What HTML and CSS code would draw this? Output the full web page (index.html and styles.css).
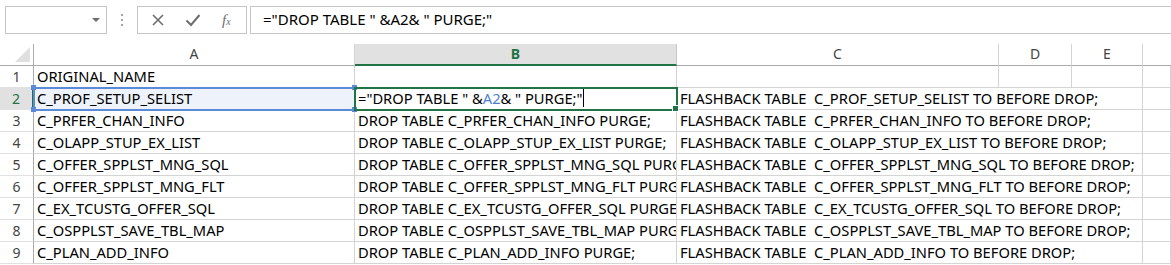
FILE: index.html
```html
<!DOCTYPE html>
<html lang="ko">
<head>
    <meta charset="UTF-8">
    <title>Book1 - Excel</title>
    <link rel="stylesheet" href="styles.css">
</head>
<body>
    <div class="formula-bar">
        <div class="name-box"><span class="name-arrow"></span></div>
        <div class="grip"><span></span><span></span><span></span></div>
        <div class="fx-buttons">
            <svg class="btn-icon" width="14" height="14" viewBox="0 0 14 14"><path d="M2 2 L12 12 M12 2 L2 12" stroke="#6d6d6d" stroke-width="1.6" fill="none"/></svg>
            <svg class="btn-icon" width="16" height="14" viewBox="0 0 16 14"><path d="M1.5 7.5 L6 12 L14.5 2" stroke="#6d6d6d" stroke-width="2" fill="none"/></svg>
            <span class="fx">f<sub>x</sub></span>
        </div>
        <div class="formula-input">="DROP TABLE " &amp;A2&amp; " PURGE;"</div>
    </div>

    <div class="sheet" id="sheet">
        <div class="corner"><span class="corner-tri"></span></div>
        <div class="col-head">A</div>
        <div class="col-head active">B</div>
        <div class="col-head">C</div>
        <div class="col-head">D</div>
        <div class="col-head">E</div>
        <div class="col-head last"></div>
    </div>

    <script>
        const names = [
            "C_PROF_SETUP_SELIST",
            "C_PRFER_CHAN_INFO",
            "C_OLAPP_STUP_EX_LIST",
            "C_OFFER_SPPLST_MNG_SQL",
            "C_OFFER_SPPLST_MNG_FLT",
            "C_EX_TCUSTG_OFFER_SQL",
            "C_OSPPLST_SAVE_TBL_MAP",
            "C_PLAN_ADD_INFO"
        ];

        const sheet = document.getElementById("sheet");

        function addCell(cls, html) {
            const cell = document.createElement("div");
            cell.className = cls;
            cell.innerHTML = html;
            sheet.appendChild(cell);
            return cell;
        }

        // row 1: header names only
        addCell("row-head", "1");
        addCell("cell", "ORIGINAL_NAME");
        ["", "", "", "", ""].forEach(() => addCell("cell", ""));

        names.forEach((name, i) => {
            const row = i + 2;
            if (row === 2) {
                addCell("row-head active", "2");
                addCell("cell ref-range", name + '<span class="h tl"></span><span class="h tr"></span><span class="h bl"></span><span class="h br"></span>');
                addCell("cell editing", '="DROP TABLE " &amp;<span class="ref">A2</span>&amp; " PURGE;"<span class="caret"></span><span class="fill-handle"></span>');
            } else {
                addCell("row-head", String(row));
                addCell("cell", name);
                addCell("cell", "DROP TABLE " + name + " PURGE;");
            }
            addCell("cell span3", "FLASHBACK TABLE  " + name + " TO BEFORE DROP;");
            addCell("cell", "");
        });
    </script>
</body>
</html>
```

FILE: styles.css
```css
body {
    margin: 0;
    font-family: 'Noto Sans', 'Noto Sans CJK KR', sans-serif;
    background: #ffffff;
    color: #000000;
    overflow: hidden;
}
.formula-bar {
    display: flex;
    align-items: flex-start;
    height: 44px;
    padding: 6px 0 0 5px;
    box-sizing: border-box;
}
.name-box {
    position: relative;
    width: 102px;
    height: 28px;
    border: 1px solid #c6c6c6;
    box-sizing: border-box;
}
.name-arrow {
    position: absolute;
    right: 6px;
    top: 11px;
    border-left: 4px solid transparent;
    border-right: 4px solid transparent;
    border-top: 4px solid #6d6d6d;
}
.grip {
    display: flex;
    flex-direction: column;
    gap: 3px;
    width: 30px;
    height: 28px;
    align-items: center;
    justify-content: center;
    box-sizing: border-box;
}
.grip span {
    width: 2px;
    height: 2px;
    background: #a6a6a6;
}
.fx-buttons {
    display: flex;
    align-items: center;
    width: 110px;
    height: 28px;
    border: 1px solid #c6c6c6;
    box-sizing: border-box;
    padding-left: 13px;
    gap: 20px;
}
.fx {
    font-family: 'Liberation Serif', serif;
    font-style: italic;
    font-size: 15px;
    color: #6d6d6d;
    line-height: 1;
    margin-left: 1px;
}
.fx sub {
    font-size: 10px;
    vertical-align: 0;
}
.formula-input {
    flex: 1;
    height: 28px;
    margin-left: 3px;
    border-top: 1px solid #c6c6c6;
    border-bottom: 1px solid #c6c6c6;
    border-left: 1px solid #c6c6c6;
    box-sizing: border-box;
    padding-left: 12px;
    font-size: 15px;
    line-height: 25px;
    white-space: pre;
}
.sheet {
    display: grid;
    grid-template-columns: 34px 321px 322px 322px 73px 71px 1fr;
    grid-auto-rows: 22px;
    font-size: 14.7px;
}
.corner {
    position: relative;
    border-right: 1px solid #ababab;
    border-bottom: 1px solid #ababab;
}
.corner-tri {
    position: absolute;
    right: 3px;
    bottom: 3px;
    border-left: 15px solid transparent;
    border-bottom: 15px solid #dfdfdf;
}
.col-head {
    display: flex;
    align-items: center;
    justify-content: center;
    border-bottom: 1px solid #ababab;
    border-right: 1px solid #d4d4d4;
    color: #444444;
    font-size: 14px;
    padding-bottom: 2px;
    box-sizing: border-box;
}
.col-head.active {
    background: #e1e1e1;
    color: #217346;
    font-weight: bold;
    border-bottom: 2px solid #217346;
    border-right-color: #c6c6c6;
}
.col-head.last {
    border-right: none;
}
.row-head {
    display: flex;
    align-items: center;
    justify-content: center;
    border-right: 1px solid #ababab;
    border-bottom: 1px solid #e1e1e1;
    color: #444444;
    font-size: 14px;
    box-sizing: border-box;
}
.row-head.active {
    background: #e1e1e1;
    color: #217346;
    border-right: 2px solid #217346;
}
.cell {
    position: relative;
    display: flex;
    align-items: flex-end;
    padding: 0 0 1px 3px;
    border-right: 1px solid #d4d4d4;
    border-bottom: 1px solid #d4d4d4;
    box-sizing: border-box;
    white-space: pre;
    overflow: hidden;
    line-height: 20px;
}
.span3 {
    grid-column: span 3;
}
.ref-range {
    overflow: visible;
    background: #eef2fb;
    outline: 2px solid #5b8ad8;
    outline-offset: -1px;
    z-index: 1;
}
.ref {
    color: #4a7fd4;
}
.h {
    position: absolute;
    width: 5px;
    height: 5px;
    background: #5b8ad8;
}
.tl { left: -3px; top: -3px; }
.tr { right: -3px; top: -3px; }
.bl { left: -3px; bottom: -3px; }
.br { right: -3px; bottom: -3px; }
.editing {
    overflow: visible;
    outline: 2px solid #217346;
    outline-offset: -1px;
    z-index: 2;
}
.caret {
    display: inline-block;
    width: 1px;
    height: 18px;
    background: #000000;
    margin-left: 1px;
    margin-bottom: 1px;
}
.fill-handle {
    position: absolute;
    right: -3px;
    bottom: -3px;
    width: 5px;
    height: 5px;
    background: #217346;
    border: 1px solid #ffffff;
}
```
